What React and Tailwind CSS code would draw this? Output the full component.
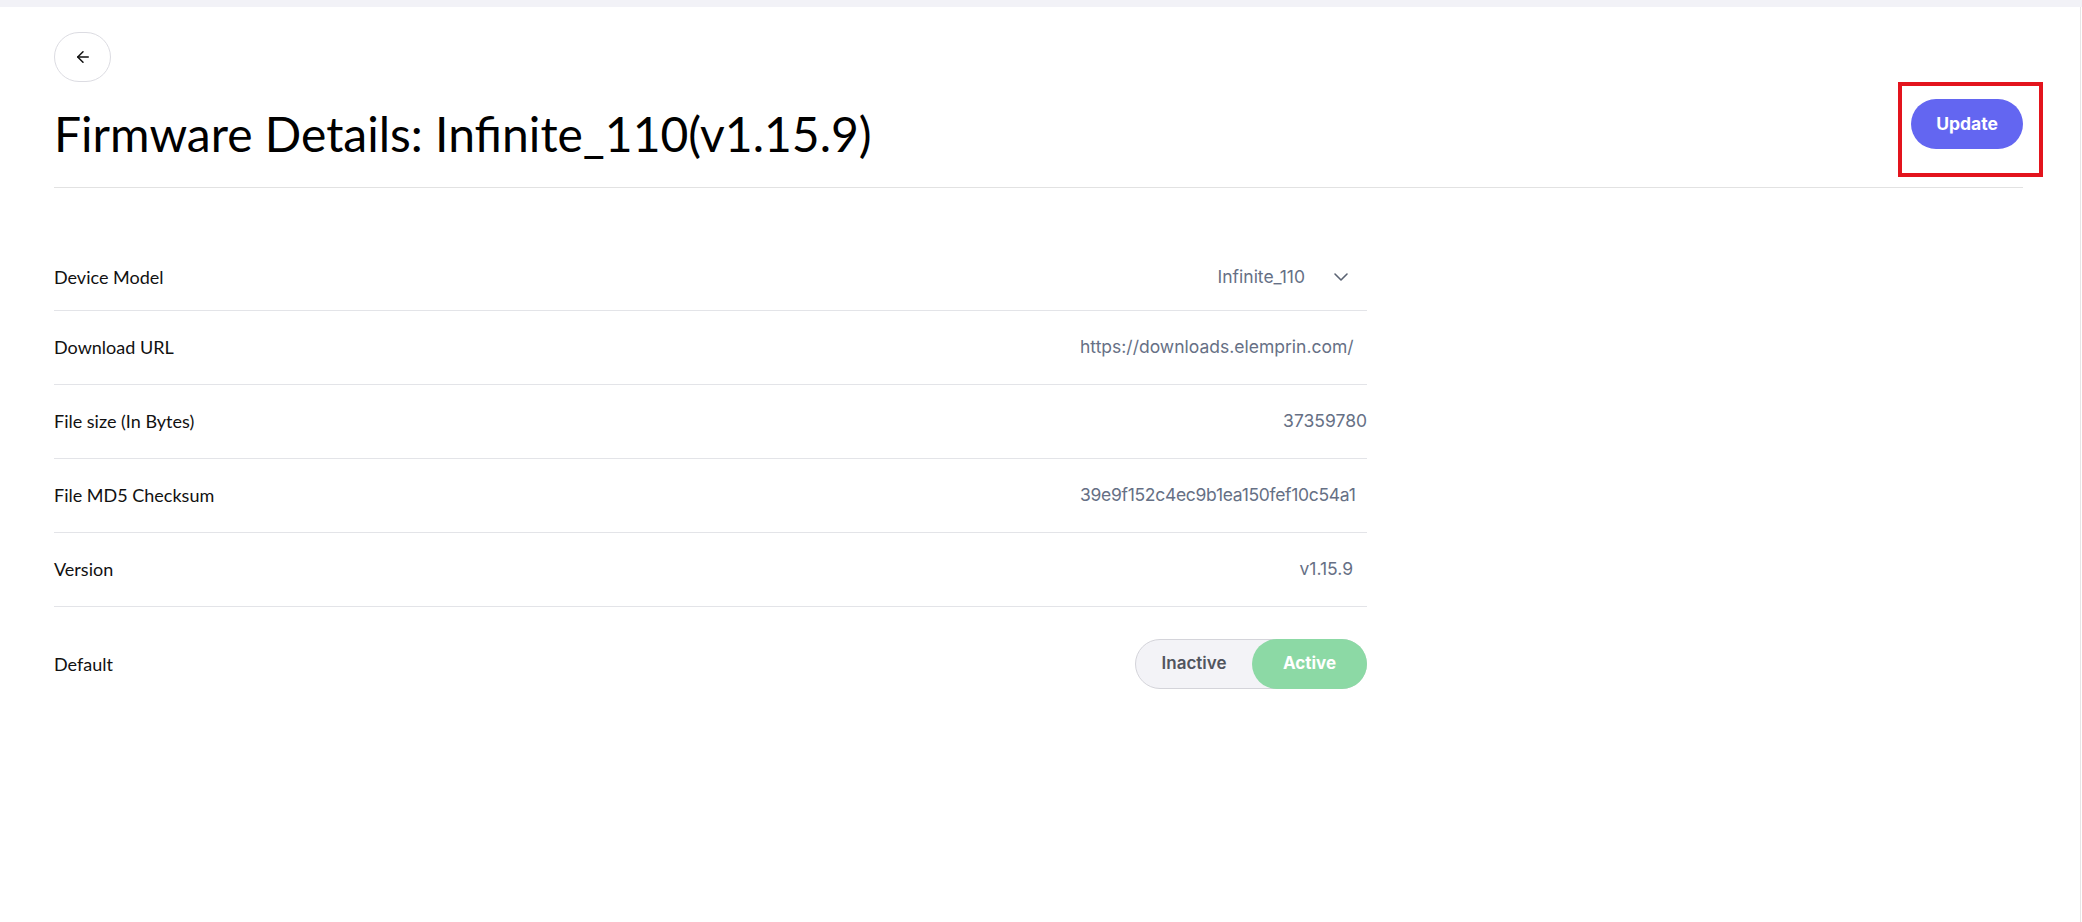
import React from "react";
import { ArrowLeft, ChevronDown } from "lucide-react";

function Row({ label, children, last, first }) {
  let cls = "flex h-[74px] items-center justify-between border-b border-[#e3e4e8]";
  if (first) cls = "flex h-[67px] items-center justify-between border-b border-[#e3e4e8]";
  if (last) cls = "flex items-center justify-between pt-[32px]";
  return (
    <div className={cls}>
      <span className="text-[18px] text-[#111111] font-['Lato',sans-serif]">{label}</span>
      {children}
    </div>
  );
}

export default function App() {
  return (
    <div className="min-h-screen flex flex-col bg-white font-['Inter',sans-serif]">
      <div className="h-[7px] bg-[#f2f2f7]" />
      <div className="flex-1 w-[2081px] border-r border-[#e6e6e6] pl-[54px] pr-[57px]">
        <div className="pt-[25px]">
          <button className="flex h-[50px] w-[57px] items-center justify-center rounded-full border border-[#dcdce2] bg-white">
            <ArrowLeft size={18} strokeWidth={2} color="#111" />
          </button>
        </div>
        <div className="flex items-start justify-between border-b border-[#e2e2e2] pb-[25px]">
          <h1 className="mt-[24px] text-[48px] leading-[56px] font-normal text-black font-['Lato',sans-serif]">
            Firmware Details: Infinite_110(v1.15.9)
          </h1>
          <div className="relative mt-[17px]">
            <button className="h-[50px] w-[112px] rounded-full bg-[#6366f1] text-[17.5px] font-bold text-white">
              Update
            </button>
            <div className="pointer-events-none absolute left-[-13px] top-[-17px] h-[95px] w-[145px] border-[4px] border-[#e3141d]" />
          </div>
        </div>

        <div className="mt-[56px] w-[1313px]">
          <Row label="Device Model" first>
            <div className="flex items-center gap-[24px] pr-[14px] text-[17.5px] text-[#667085]">
              <span>Infinite_110</span>
              <ChevronDown size={24} strokeWidth={1.6} color="#5b6373" />
            </div>
          </Row>
          <Row label="Download URL">
            <span className="mr-[12px] w-[275px] overflow-hidden whitespace-nowrap text-[17.5px] text-[#667085]">
              https://downloads.elemprin.com/
            </span>
          </Row>
          <Row label="File size (In Bytes)">
            <span className="text-[17.5px] text-[#667085]">37359780</span>
          </Row>
          <Row label="File MD5 Checksum">
            <span className="mr-[12px] w-[275px] overflow-hidden whitespace-nowrap text-[17.5px] tracking-[-0.3px] text-[#667085]">
              39e9f152c4ec9b1ea150fef10c54a1c7
            </span>
          </Row>
          <Row label="Version">
            <span className="pr-[14px] text-[17.5px] text-[#667085]">v1.15.9</span>
          </Row>
          <Row label="Default" last>
            <div className="flex h-[50px] w-[232px] items-center rounded-full border border-[#d4d4da] bg-[#f3f3f7]">
              <span className="flex h-full flex-1 items-center justify-center text-[17px] font-semibold text-[#51555e]">
                Inactive
              </span>
              <span className="flex h-[50px] w-[115px] -mr-px items-center justify-center rounded-full bg-[#8cd9a5] text-[17px] font-bold text-white">
                Active
              </span>
            </div>
          </Row>
        </div>
      </div>
    </div>
  );
}
